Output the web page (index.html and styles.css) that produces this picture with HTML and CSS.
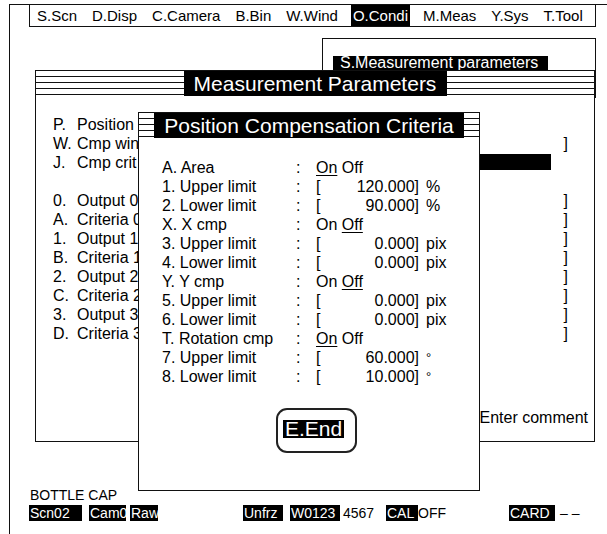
FILE: index.html
```html
<!DOCTYPE html>
<html lang="en">
<head>
    <meta charset="UTF-8">
    <title>Position Compensation Criteria</title>
    <link rel="stylesheet" href="styles.css">
</head>
<body>
<div class="screen">
    <div class="frame">
        <ul class="menu">
            <li>S.Scn</li>
            <li>D.Disp</li>
            <li>C.Camera</li>
            <li>B.Bin</li>
            <li>W.Wind</li>
            <li class="on">O.Condi</li>
            <li>M.Meas</li>
            <li>Y.Sys</li>
            <li>T.Tool</li>
        </ul>

        <div class="win meas">
            <div class="titlebar"><span class="title meas-title">Measurement Parameters</span></div>
            <div class="meas-body">
                <div class="row"><span>P.</span><span>Position</span><span></span></div>
                <div class="row"><span>W.</span><span>Cmp win</span><span>]</span></div>
                <div class="row"><span>J.</span><span>Cmp crit</span><span class="field"></span></div>
                <div class="row"></div>
                <div class="row"><span>0.</span><span>Output 0</span><span>]</span></div>
                <div class="row"><span>A.</span><span>Criteria 0</span><span>]</span></div>
                <div class="row"><span>1.</span><span>Output 1</span><span>]</span></div>
                <div class="row"><span>B.</span><span>Criteria 1</span><span>]</span></div>
                <div class="row"><span>2.</span><span>Output 2</span><span>]</span></div>
                <div class="row"><span>C.</span><span>Criteria 2</span><span>]</span></div>
                <div class="row"><span>3.</span><span>Output 3</span><span>]</span></div>
                <div class="row"><span>D.</span><span>Criteria 3</span><span>]</span></div>
            </div>
            <div class="comment">Enter comment</div>
        </div>

        <div class="footer">
            <div class="model">BOTTLE CAP</div>
            <div class="status">
                <span class="tag w-scn">Scn02</span>
                <span class="tag w-cam">Cam0</span>
                <span class="tag w-raw">Raw</span>
                <span class="tag w-frz">Unfrz</span>
                <span class="tag w-win">W0123</span>
                <span class="txt w-num">4567</span>
                <span class="tag w-cal">CAL</span>
                <span class="txt">OFF</span>
                <span class="tag w-card">CARD</span>
                <span class="txt w-dash">– –</span>
            </div>
        </div>
    </div>

    <div class="win sub"><span class="sub-label">S.Measurement parameters</span></div>

    <div class="win dialog">
        <div class="titlebar"><span class="title dlg-title">Position Compensation Criteria</span></div>
        <div class="dlg-body">
            <div class="item"><span>A. Area</span><span>:</span><span><u>On</u> Off</span><span></span></div>
            <div class="item"><span>1. Upper limit</span><span>:</span><span class="val"><i>[</i><i>120.000]</i></span><span class="unit">%</span></div>
            <div class="item"><span>2. Lower limit</span><span>:</span><span class="val"><i>[</i><i>90.000]</i></span><span class="unit">%</span></div>
            <div class="item"><span>X. X cmp</span><span>:</span><span>On <u>Off</u></span><span></span></div>
            <div class="item"><span>3. Upper limit</span><span>:</span><span class="val"><i>[</i><i>0.000]</i></span><span class="unit">pix</span></div>
            <div class="item"><span>4. Lower limit</span><span>:</span><span class="val"><i>[</i><i>0.000]</i></span><span class="unit">pix</span></div>
            <div class="item"><span>Y. Y cmp</span><span>:</span><span>On <u>Off</u></span><span></span></div>
            <div class="item"><span>5. Upper limit</span><span>:</span><span class="val"><i>[</i><i>0.000]</i></span><span class="unit">pix</span></div>
            <div class="item"><span>6. Lower limit</span><span>:</span><span class="val"><i>[</i><i>0.000]</i></span><span class="unit">pix</span></div>
            <div class="item"><span>T. Rotation cmp</span><span>:</span><span><u>On</u> Off</span><span></span></div>
            <div class="item"><span>7. Upper limit</span><span>:</span><span class="val"><i>[</i><i>60.000]</i></span><span class="unit deg">°</span></div>
            <div class="item"><span>8. Lower limit</span><span>:</span><span class="val"><i>[</i><i>10.000]</i></span><span class="unit deg">°</span></div>
        </div>
        <div class="btn"><span>E.End</span></div>
    </div>
</div>
</body>
</html>
```

FILE: styles.css
```css
*{
    margin: 0;padding: 0;
    box-sizing: border-box;
}
ul,li{list-style: none}
body{
    background: #fff;
    color: #000;
    font-family: "Liberation Sans", Arial, sans-serif;
}
.screen{
    position: relative;
    width: 607px;
    height: 534px;
    overflow: hidden;
}
/* outer frame: only top + left lines are visible */
.frame{
    margin: 4px 0 0 9px;
    height: 540px;
    border-top: 1px solid #111;
    border-left: 1px solid #111;
}

/* top menu */
.menu{
    display: flex;
    gap: 15px;
    width: 567px;
    height: 23px;
    margin: -1px 0 0 19px;
    padding-left: 7px;
    border: 1px solid #111;
    font-size: 15px;
    line-height: 21px;
}
.menu .on{
    background: #000;
    color: #fff;
    padding: 0 2px;
    margin: 0 -2px;
}

/* windows */
.win{
    background: #fff;
    border: 1px solid #111;
}
.titlebar{
    display: flex;
    justify-content: center;
    height: 25px;
    background: repeating-linear-gradient(to bottom, #fff 0 5px, #111 5px 6px);
}
.title{
    background: #000;
    color: #fff;
    font-size: 21px;
    line-height: 25px;
    text-align: center;
}

.meas{
    position: relative;
    z-index: 2;
    display: flex;
    flex-direction: column;
    width: 560px;
    height: 372px;
    margin: 43px 0 0 25px;
}
.meas-title{width: 263px;}
.meas-body{
    padding: 19px 26px 0 17px;
    font-size: 16px;
}
.row{
    display: grid;
    grid-template-columns: 24px 1fr auto;
    height: 19px;
    line-height: 19px;
    white-space: nowrap;
}
.row .field{
    width: 72px;
    height: 16px;
    margin: 1px 17px 0 0;
    background: #000;
}
.comment{
    margin-top: auto;
    padding: 0 6px 14px 0;
    text-align: right;
    font-size: 16px;
    line-height: 19px;
}

/* window behind, only its header shows */
.sub{
    position: absolute;
    z-index: 1;
    left: 322px;
    top: 38px;
    width: 274px;
    height: 60px;
    padding: 15px 0 0 10px;
}
.sub-label{
    display: inline-block;
    width: 215px;
    height: 14px;
    padding-left: 7px;
    background: #000;
    color: #fff;
    font-size: 16px;
    line-height: 14px;
    white-space: nowrap;
}

/* dialog */
.dialog{
    position: absolute;
    z-index: 3;
    left: 138px;
    top: 112px;
    width: 342px;
    height: 379px;
}
.dlg-title{width: 310px;}
.dlg-body{
    padding: 20px 0 0 23px;
    font-size: 16px;
}
.item{
    display: grid;
    grid-template-columns: 134px 20px 103px auto;
    height: 19px;
    line-height: 19px;
    white-space: nowrap;
}
.item u{text-underline-offset: 2px;}
.val{
    display: flex;
    justify-content: space-between;
}
.val i{font-style: normal;}
.unit{padding-left: 7px;}
.deg{font-size: 13px;}

.btn{
    width: 81px;
    height: 45px;
    margin: 22px 0 0 137px;
    border: 2px solid #222;
    border-radius: 11px;
}
.btn span{
    display: block;
    width: 61px;
    height: 18px;
    margin: 10px 0 0 5px;
    background: #000;
    color: #fff;
    font-size: 21px;
    line-height: 18px;
    text-align: center;
}

/* bottom status */
.footer{
    margin: 45px 0 0 19px;
    font-size: 14px;
}
.model{line-height: 17px;padding-left: 1px;}
.status{
    display: flex;
    margin-top: 1px;
    line-height: 16px;
    white-space: nowrap;
}
.tag{
    background: #000;
    color: #fff;
    padding-left: 1px;
}
.w-scn{width: 53px;}
.w-cam{width: 37px;margin-left: 7px;}
.w-raw{width: 28px;margin-left: 4px;}
.w-frz{width: 40px;margin-left: 85px;}
.w-win{width: 50px;margin-left: 7px;}
.w-num{width: 34px;margin-left: 2px;padding-left: 1px;}
.w-cal{width: 32px;margin-left: 10px;}
.w-card{width: 46px;margin-left: 63px;}
.w-dash{margin-left: 5px;}
```
